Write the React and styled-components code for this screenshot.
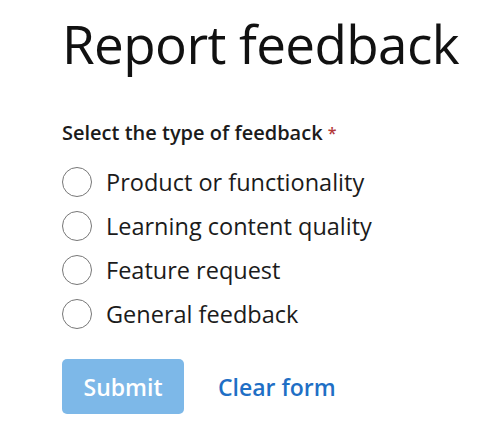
import React from 'react'
import styled, { createGlobalStyle } from 'styled-components'

const GlobalStyle = createGlobalStyle`
    html, body {
        margin: 0;
        padding: 0;
        background: #ffffff;
    }
    body {
        font-family: "Open Sans", "Noto Sans", sans-serif;
        color: #161616;
    }
`

const options = [
    'Product or functionality',
    'Learning content quality',
    'Feature request',
    'General feedback',
]

function App() {
    return (
        <>
            <GlobalStyle />
            <Page>
                <Title>Report feedback</Title>
                <Form>
                    <Label>
                        Select the type of feedback <Required>*</Required>
                    </Label>
                    <OptionList>
                        {options.map((text) => (
                            <Option key={text}>
                                <Radio type='radio' name='type' />
                                <OptionText>{text}</OptionText>
                            </Option>
                        ))}
                    </OptionList>
                    <Actions>
                        <SubmitButton type='button'>Submit</SubmitButton>
                        <ClearLink href='#'>Clear form</ClearLink>
                    </Actions>
                </Form>
            </Page>
        </>
    )
}

export default App

const Page = styled.div`
    width: 480px;
    height: 442px;
    box-sizing: border-box;
    padding: 12px 0 0 62px;
    display: flex;
    flex-direction: column;
`

const Title = styled.h1`
    margin: 0;
    font-size: 53px;
    font-weight: 400;
    line-height: 64px;
    letter-spacing: -0.6px;
    color: #111111;
`

const Form = styled.form`
    display: flex;
    flex-direction: column;
    margin-top: 45px;
`

const Label = styled.div`
    font-size: 20px;
    font-weight: 600;
    line-height: 24px;
    color: #1b1b1b;
`

const Required = styled.span`
    color: #b33a3a;
    font-size: 16px;
    vertical-align: top;
`

const OptionList = styled.div`
    display: flex;
    flex-direction: column;
    margin-top: 22px;
    gap: 14px;
`

const Option = styled.label`
    display: flex;
    align-items: center;
    gap: 14px;
    height: 30px;
`

const Radio = styled.input`
    appearance: none;
    flex: none;
    margin: 0;
    width: 30px;
    height: 30px;
    border-radius: 50%;
    border: 1.5px solid #777777;
    box-sizing: border-box;
    background: #ffffff;
`

const OptionText = styled.span`
    font-size: 23.5px;
    line-height: 30px;
    white-space: nowrap;
    color: #1b1b1b;
`

const Actions = styled.div`
    display: flex;
    align-items: center;
    gap: 34px;
    margin-top: 30px;
`

const SubmitButton = styled.button`
    width: 122px;
    height: 55px;
    border: none;
    border-radius: 5px;
    background: #7db8e8;
    color: #ffffff;
    font-family: inherit;
    font-size: 23px;
    font-weight: 600;
`

const ClearLink = styled.a`
    color: #1f6fc5;
    font-size: 23px;
    font-weight: 600;
    text-decoration: none;
`
